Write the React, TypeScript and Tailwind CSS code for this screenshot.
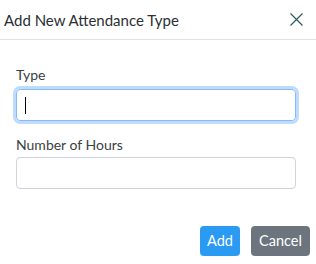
import React from "react";

export default function App() {
  return (
    <div className="w-[316px] h-[264px] bg-white flex flex-col" style={{ fontFamily: "Lato, 'Open Sans', sans-serif" }}>
      <div className="h-[40px] border-b border-[#dee2e6] flex items-center justify-between pl-[4px] pr-[13px]">
        <span className="text-[15px] text-[#2b2f33] leading-[20px]">Add New Attendance Type</span>
        <svg width="13" height="13" viewBox="0 0 13 13" className="text-[#2f5a5a]">
          <path d="M0.5 0.5 L12.5 12.5 M12.5 0.5 L0.5 12.5" stroke="currentColor" strokeWidth="1.2" fill="none" />
        </svg>
      </div>
      <div className="flex flex-col pl-[16px] pr-[20px] pt-[25px]">
        <label className="text-[14px] leading-[20px] text-[#3a3f44] mb-[4px]">Type</label>
        <div className="h-[32px] rounded-[4px] border border-[#80bdff] ring-[3px] ring-[#bfdcff] flex items-center pl-[8px]">
          <div className="w-[1px] h-[17px] bg-black" />
        </div>
        <label className="text-[14px] leading-[20px] text-[#3a3f44] mt-[14px] mb-[2px]">Number of Hours</label>
        <div className="h-[32px] rounded-[4px] border border-[#ced4da]" />
      </div>
      <div className="flex justify-end gap-[11px] pr-[6px] mt-[37px]">
        <button className="w-[40px] h-[30px] rounded-[4px] bg-[#2b9af3] text-white text-[14.5px]">Add</button>
        <button className="w-[59px] h-[30px] rounded-[4px] bg-[#6c757d] text-white text-[14.5px]">Cancel</button>
      </div>
    </div>
  );
}
